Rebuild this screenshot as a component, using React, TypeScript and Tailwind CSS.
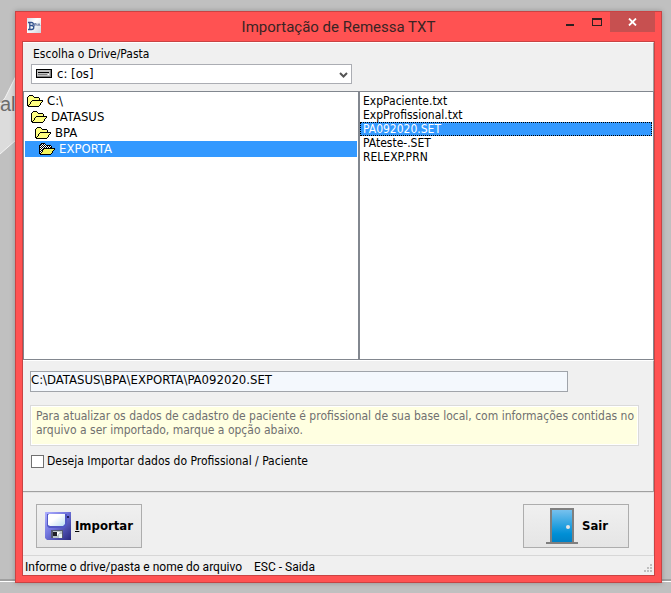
import { useState } from "react"

interface Folder {
  name: string
  indent: string
}

const folders: Folder[] = [
  { name: "C:\\", indent: "pl-[2px]" },
  { name: "DATASUS", indent: "pl-[6px]" },
  { name: "BPA", indent: "pl-[10px]" },
  { name: "EXPORTA", indent: "pl-[14px]" },
]

const files = ["ExpPaciente.txt", "ExpProfissional.txt", "PA092020.SET", "PAteste-.SET", "RELEXP.PRN"]

function FolderIcon({ current }: { current: boolean }) {
  return (
    <svg className="shrink-0" width="16" height="14" viewBox="0 -1 16 14" shapeRendering="crispEdges">
      <defs>
        <pattern id="folder-dark" width="2" height="2" patternUnits="userSpaceOnUse">
          <rect width="2" height="2" fill="#000000" />
          <rect width="1" height="1" fill="#ffffff" />
          <rect x="1" y="1" width="1" height="1" fill="#ffffff" />
        </pattern>
      </defs>
      <path d="M2 1h4v1h1v1h5v2h-7v1h-1v1h-1v2h-1v1h-1v-8h1z" fill={current ? "url(#folder-dark)" : "#ffff80"} />
      <path d="M5 6h10v1h-1v1h-1v2h-1v1h-10v-1h1v-1h1v-2h1z" fill={current ? "#f4f45c" : "#ffff80"} />
      <path
        d="M0 2h1v9h-1zM1 1h1v1h-1zM2 0h4v1h-4zM6 1h1v1h-1zM7 2h5v1h-5zM12 3h1v2h-1zM5 5h11v1h-11zM4 6h1v1h-1zM3 7h1v2h-1zM2 9h1v1h-1zM1 10h1v2h-1zM15 6h1v1h-1zM14 7h1v1h-1zM13 8h1v2h-1zM12 10h1v1h-1zM1 11h11v1h-11z"
        fill="#000000"
      />
    </svg>
  )
}

function DriveIcon() {
  return (
    <svg
      className="pointer-events-none absolute top-[5px] left-[5px]"
      width="16"
      height="9"
      viewBox="0 0 16 9"
      shapeRendering="crispEdges"
    >
      <rect width="16" height="9" fill="#000000" />
      <rect x="1" y="1" width="13" height="6" fill="#c0c0c0" />
      <rect x="14" y="1" width="1" height="7" fill="#808080" />
      <rect x="2" y="3" width="11" height="1" fill="#000000" />
      <rect x="2" y="5" width="9" height="1" fill="#808080" />
      <rect x="12" y="5" width="1" height="1" fill="#ffffff" />
      <rect x="1" y="7" width="13" height="1" fill="#808080" />
    </svg>
  )
}

function AppIcon() {
  return (
    <svg width="14" height="15" viewBox="0 0 14 15">
      <defs>
        <linearGradient id="app-bg" x1="0" y1="0" x2="1" y2="1">
          <stop offset="0" stopColor="#d4ddea" />
          <stop offset="0.4" stopColor="#ffffff" />
          <stop offset="1" stopColor="#cbd3dc" />
        </linearGradient>
      </defs>
      <rect width="14" height="15" fill="url(#app-bg)" />
      <path
        d="M1 4.5H4.5C7 4.5 7 7.5 4.5 7.5H3M4.5 7.5C7.5 7.5 7.5 11.5 4.5 11.5H1M2.8 4.5V11.5"
        fill="none"
        stroke="#31518c"
        strokeWidth="1.3"
      />
      <path d="M7.5 8.5V5.5H9V7H7.5M10 8V5.5M11 8L12 5.5L13 8" fill="none" stroke="#5c6f9c" strokeWidth="0.8" />
    </svg>
  )
}

function FloppyIcon() {
  return (
    <svg width="26" height="28" viewBox="0 0 26 28">
      <defs>
        <linearGradient id="floppy-body" x1="0" y1="0" x2="1" y2="1">
          <stop offset="0" stopColor="#b0b0ff" />
          <stop offset="0.45" stopColor="#7074dc" />
          <stop offset="1" stopColor="#26267c" />
        </linearGradient>
        <linearGradient id="floppy-label" x1="0" y1="0" x2="1" y2="1">
          <stop offset="0.4" stopColor="#ffffff" />
          <stop offset="1" stopColor="#b9ddf2" />
        </linearGradient>
      </defs>
      <path d="M0 0H26V28H2L0 26Z" fill="url(#floppy-body)" />
      <path d="M2 2H22V13L20 16H4L2 14Z" fill="#5058c4" />
      <path d="M4 2H20V12L18 14H5L3 13V3Z" fill="url(#floppy-label)" />
      <rect x="22" y="4" width="2" height="2" fill="#20205c" />
      <rect x="6" y="18" width="12" height="8" fill="#555a70" />
      <rect x="8" y="19" width="9" height="7" fill="#b8c4c8" />
      <rect x="8" y="20" width="4" height="4" fill="#202028" />
      <path d="M12 20H15L12 24Z" fill="#ffffff" />
      <rect x="14" y="22" width="3" height="4" fill="#e4f0ec" />
    </svg>
  )
}

function DoorIcon() {
  return (
    <svg width="32" height="36" viewBox="0 0 32 36">
      <defs>
        <linearGradient id="door-fill" x1="0" y1="0" x2="0" y2="1">
          <stop offset="0" stopColor="#77c1ee" />
          <stop offset="0.6" stopColor="#1599dc" />
          <stop offset="0.75" stopColor="#008fd5" />
          <stop offset="1" stopColor="#0081c6" />
        </linearGradient>
      </defs>
      <rect x="4" width="24" height="35" fill="#7f7f7f" />
      <rect x="6" y="2" width="20" height="32" fill="url(#door-fill)" />
      <rect y="34" width="32" height="2" fill="#7f7f7f" />
      <circle cx="22" cy="19" r="2" fill="#e6e6e6" />
    </svg>
  )
}

function Backdrop() {
  return (
    <div className="absolute inset-0 -z-10 bg-[#c0c0c0]">
      <svg className="absolute top-[76px] left-0" width="16" height="80" viewBox="0 0 16 80">
        <path d="M16 0L5 22L0 28V78L16 64Z" fill="#dcdcdc" />
        <path d="M16 0L5 22L0 28M0 78L16 64" fill="none" stroke="#f4f4f4" />
      </svg>
      <span className="absolute top-[90px] left-0 font-['Liberation_Sans',sans-serif] text-[20px] leading-7 text-[#6c6c6c]">
        al
      </span>
      <div className="absolute inset-x-0 bottom-[11px] h-[3px] border-t-2 border-b border-t-[#a0a0a0] border-b-white" />
    </div>
  )
}

export default function App() {
  const [folder, setFolder] = useState("EXPORTA")
  const [file, setFile] = useState("PA092020.SET")
  const [importData, setImportData] = useState(false)

  return (
    <div className="relative isolate flex h-screen flex-col pt-[11px] pr-[9px] pb-[10px] pl-[15px] font-['DejaVu_Sans_Condensed','DejaVu_Sans',sans-serif] text-[12px] text-black">
      <Backdrop />
      <div className="flex min-h-0 flex-1 flex-col border border-[#c94343] bg-[#ff5252] px-[6px] pb-[6px] shadow-[0_0_5px_rgba(0,0,0,0.25)]">
        <header className="grid h-[29px] shrink-0 grid-cols-[1fr_auto_1fr] items-start">
          <div className="pt-[6px] pl-[5px]">
            <AppIcon />
          </div>
          <h1 className="font-['Roboto',sans-serif] text-[15px] leading-[30px] text-[#3a2424]">
            Importação de Remessa TXT
          </h1>
          <div className="flex justify-end">
            <button aria-label="Minimizar" className="flex h-5 w-[27px] items-start justify-center pt-3">
              <span className="h-[2px] w-2 bg-[#2d2020]" />
            </button>
            <button aria-label="Maximizar" className="flex h-5 w-[27px] items-start justify-center pt-[6px]">
              <span className="h-2 w-[10px] border border-t-2 border-[#2d2020]" />
            </button>
            <button aria-label="Fechar" className="flex h-5 w-[45px] items-center justify-center bg-[#c75050]">
              <svg width="9" height="8" viewBox="0 0 9 8">
                <path d="M1 0.5L8 7.5M8 0.5L1 7.5" stroke="#ffffff" strokeWidth="1.8" />
              </svg>
            </button>
          </div>
        </header>

        <main className="flex min-h-0 flex-1 flex-col border border-[#c94343] bg-[#f0f0f0]">
          <section className="h-[49px] shrink-0 border-t border-r border-t-white border-r-[#a0a0a0] pl-2">
            <label htmlFor="drive" className="block pt-[3px] pl-[2px] leading-4">
              Escolha o Drive/Pasta
            </label>
            <div className="relative mt-[2px] w-[321px] max-w-full">
              <select
                id="drive"
                className="block h-5 w-full appearance-none border border-[#abadb3] bg-white pl-[25px] text-[13px] leading-4"
              >
                <option>c: [os]</option>
              </select>
              <DriveIcon />
              <svg className="pointer-events-none absolute top-[8px] right-1" width="9" height="7" viewBox="0 0 9 7">
                <path d="M1 1L4.5 4.5L8 1" fill="none" stroke="#555555" strokeWidth="2" />
              </svg>
            </div>
          </section>

          <section className="grid min-h-0 flex-1 grid-cols-[335fr_296fr] border-y border-[#82878f] bg-white">
            <ul className="border-l border-[#82878f] pt-px pl-px">
              {folders.map((f) => (
                <li key={f.name} className="pr-px">
                  <button
                    onClick={() => setFolder(f.name)}
                    className={`flex h-4 w-full items-center gap-1 text-left text-[13px] leading-4 ${f.indent} ${
                      folder === f.name ? "bg-[#3399ff] text-white" : ""
                    }`}
                  >
                    <FolderIcon current={folder === f.name} />
                    {f.name}
                  </button>
                </li>
              ))}
            </ul>
            <ul className="border-r border-l-2 border-[#82878f] pt-[2px] pr-px">
              {files.map((name) => (
                <li key={name}>
                  <button
                    onClick={() => setFile(name)}
                    className={`block h-[14px] w-full border pl-[2px] text-left leading-3 ${
                      file === name ? "border-dotted border-black bg-[#3399ff] text-white" : "border-transparent"
                    }`}
                  >
                    {name}
                  </button>
                </li>
              ))}
            </ul>
          </section>

          <section className="h-[132px] shrink-0 border-t border-r border-b border-t-white border-r-[#a0a0a0] border-b-[#a0a0a0] pt-[10px] pr-[14px] pl-[7px]">
            <input
              type="text"
              aria-label="Arquivo selecionado"
              readOnly
              value={`C:\\DATASUS\\BPA\\EXPORTA\\${file}`}
              className="block h-[21px] w-[538px] max-w-full border border-[#a0a4aa] bg-[#f4f8fd] pb-[4px] text-[13px] leading-4 outline-none"
            />
            <p className="mt-[13px] h-[41px] border border-[#dadada] bg-[#ffffe1] pt-[3px] pl-[5px] leading-[14px] text-[#707070] shadow-[inset_0_0_0_1px_#ffffff]">
              Para atualizar os dados de cadastro de paciente é profissional de sua base local, com informações contidas no
              arquivo a ser importado, marque a opção abaixo.
            </p>
            <label className="mt-[7px] ml-px flex items-center gap-[3px] leading-4">
              <input
                type="checkbox"
                checked={importData}
                onChange={(e) => setImportData(e.target.checked)}
                className="size-[13px] appearance-none border border-[#707070] bg-white checked:bg-[#3399ff]"
              />
              Deseja Importar dados do Profissional / Paciente
            </label>
          </section>

          <section className="flex h-[63px] shrink-0 items-start justify-between border-t border-r border-t-[#e3e3e3] border-r-[#e3e3e3] pt-[11px] pr-[24px] pl-[13px] text-[13px] font-bold">
            <button className="flex h-11 w-[106px] items-center gap-1 border border-[#adadad] bg-linear-to-b from-[#f0f0f0] to-[#e5e5e5] pl-2">
              <FloppyIcon />
              <span>
                <u>I</u>mportar
              </span>
            </button>
            <button className="flex h-11 w-[106px] items-center gap-1 border border-[#adadad] bg-linear-to-b from-[#f0f0f0] to-[#e5e5e5] pl-[22px]">
              <DoorIcon />
              Sair
            </button>
          </section>

          <footer className="flex h-5 shrink-0 items-center justify-between border-t border-[#d7d7d7] pr-[2px] pl-[2px] font-['Roboto',sans-serif] leading-4">
            <div className="flex gap-3 pt-[2px]">
              <span>Informe o drive/pasta e nome do arquivo</span>
              <span>ESC - Saida</span>
            </div>
            <svg className="mt-1" width="8" height="8" viewBox="0 0 8 8" fill="#bfbfbf">
              <path d="M6 0h2v2H6zM3 3h2v2H3zM6 3h2v2H6zM0 6h2v2H0zM3 6h2v2H3zM6 6h2v2H6z" />
            </svg>
          </footer>
        </main>
      </div>
    </div>
  )
}
